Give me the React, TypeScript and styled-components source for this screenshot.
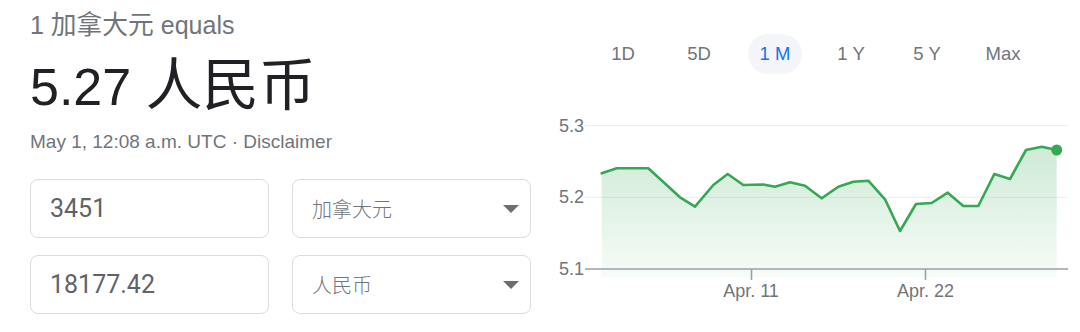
import React from "react";
import styled, { createGlobalStyle } from "styled-components";

const GlobalStyle = createGlobalStyle`
  html, body {
    margin: 0;
    padding: 0;
    background: #ffffff;
  }
  body {
    font-family: "Liberation Sans", Arial, "Noto Sans CJK SC", sans-serif;
  }
`;

const Page = styled.div`
  display: flex;
  width: 1080px;
  height: 332px;
  overflow: hidden;
`;

const LeftColumn = styled.div`
  flex: 0 0 501px;
  padding: 10px 0 0 30px;
`;

const Cjk = styled.span<{ $scale?: number }>`
  font-family: "Noto Sans CJK SC", sans-serif;
  font-size: ${(p) => p.$scale ?? 1.03}em;
  line-height: 1;
`;

const Title = styled.div`
  height: 30px;
  font-size: 25px;
  line-height: 30px;
  color: #70757a;
  white-space: nowrap;
`;

const Value = styled.div`
  margin-top: 12px;
  height: 60px;
  font-size: 52px;
  line-height: 60px;
  color: #202124;
  white-space: nowrap;
`;

const DateLine = styled.div`
  margin-top: 18px;
  height: 24px;
  font-size: 19px;
  line-height: 24px;
  color: #70757a;
  white-space: nowrap;
`;

const ConverterGrid = styled.div`
  margin-top: 25px;
  display: grid;
  grid-template-columns: 239px 239px;
  column-gap: 23px;
  row-gap: 17px;
`;

const FieldBox = styled.div`
  box-sizing: border-box;
  height: 59px;
  border: 1px solid #dadce0;
  border-radius: 8px;
  display: flex;
  align-items: center;
`;

const AmountField = styled(FieldBox)`
  padding-left: 19px;
  font-family: Roboto, "Liberation Sans", sans-serif;
  font-size: 25px;
  color: #5f6368;
`;

const CurrencySelect = styled(FieldBox)`
  justify-content: space-between;
  padding: 0 11px 0 19px;
  font-family: "Noto Sans CJK SC", sans-serif;
  font-size: 20px;
  font-weight: 300;
  color: #70757a;
`;

const RightColumn = styled.div`
  flex: 1;
  margin-left: 17px;
  padding-top: 34px;
  display: flex;
  flex-direction: column;
`;

const RangeTabs = styled.div`
  display: flex;
  gap: 22px;
  padding-left: 48px;
`;

const RangeTab = styled.div<{ $active?: boolean }>`
  width: 54px;
  height: 40px;
  border-radius: 20px;
  display: flex;
  align-items: center;
  justify-content: center;
  font-size: 18.5px;
  white-space: nowrap;
  color: ${(p) => (p.$active ? "#1a73e8" : "#70757a")};
  background: ${(p) => (p.$active ? "#f3f5f9" : "transparent")};
`;

const ChartSvg = styled.svg`
  display: block;
  margin-top: 26px;
`;

const AxisLabel = styled.text`
  font-family: "Liberation Sans", Arial, sans-serif;
  font-size: 18px;
  fill: #70757a;
`;

const Caret = () => (
  <svg width="16" height="8" viewBox="0 0 16 8">
    <path d="M0 0 L16 0 L8 8 Z" fill="#6b6f73" />
  </svg>
);

const points: [number, number][] = [
  [601.7, 173.3],
  [616.7, 168.3],
  [648.3, 168.3],
  [680, 197.3],
  [695, 206.7],
  [713.3, 185],
  [727.7, 174],
  [743.3, 185],
  [763.3, 184.5],
  [775, 186.7],
  [790, 182.3],
  [805, 185.7],
  [821.7, 198.3],
  [838.3, 186.7],
  [853.3, 181.7],
  [868.3, 180.7],
  [885, 199.3],
  [900, 231],
  [916, 204],
  [931.7, 203],
  [947.7, 192.7],
  [963.3, 206],
  [978.3, 206],
  [994.3, 174],
  [1010, 179],
  [1026, 150],
  [1041.7, 146.7],
  [1056.7, 150],
];

const ranges = ["1D", "5D", "1 M", "1 Y", "5 Y", "Max"];

const Chart = () => {
  const line = points.map(([x, y], i) => `${i ? "L" : "M"}${x} ${y}`).join(" ");
  const first = points[0];
  const last = points[points.length - 1];
  const area = `${line} L${last[0]} 277 L${first[0]} 277 Z`;
  return (
    <ChartSvg width="532" height="220" viewBox="548 100 532 220">
      <defs>
        <linearGradient id="fillGrad" x1="0" y1="146" x2="0" y2="277" gradientUnits="userSpaceOnUse">
          <stop offset="0" stopColor="#34a853" stopOpacity="0.24" />
          <stop offset="1" stopColor="#34a853" stopOpacity="0.04" />
        </linearGradient>
      </defs>
      <line x1="585" y1="125.5" x2="1068" y2="125.5" stroke="#ededed" strokeWidth="1" />
      <line x1="585" y1="197.3" x2="1068" y2="197.3" stroke="#ededed" strokeWidth="1" />
      <path d={area} fill="url(#fillGrad)" />
      <line x1="585" y1="269" x2="1068" y2="269" stroke="#9aa0a6" strokeWidth="1.6" />
      <line x1="751.5" y1="269" x2="751.5" y2="280" stroke="#9aa0a6" strokeWidth="1.6" />
      <line x1="925.5" y1="269" x2="925.5" y2="280" stroke="#9aa0a6" strokeWidth="1.6" />
      <path d={line} fill="none" stroke="#34a853" strokeWidth="2.6" strokeLinejoin="round" strokeLinecap="round" />
      <circle cx={last[0]} cy={last[1]} r="5.5" fill="#34a853" />
      <AxisLabel x="584" y="125.5" textAnchor="end" dominantBaseline="central">5.3</AxisLabel>
      <AxisLabel x="584" y="197.3" textAnchor="end" dominantBaseline="central">5.2</AxisLabel>
      <AxisLabel x="584" y="269" textAnchor="end" dominantBaseline="central">5.1</AxisLabel>
      <AxisLabel x="751" y="297" textAnchor="middle">Apr. 11</AxisLabel>
      <AxisLabel x="925.5" y="297" textAnchor="middle">Apr. 22</AxisLabel>
    </ChartSvg>
  );
};

export default function App() {
  return (
    <>
      <GlobalStyle />
      <Page>
        <LeftColumn>
          <Title>
            1 <Cjk>加拿大元</Cjk> equals
          </Title>
          <Value>
            5.27 <Cjk $scale={1.09}>人民币</Cjk>
          </Value>
          <DateLine>May 1, 12:08 a.m. UTC · Disclaimer</DateLine>
          <ConverterGrid>
            <AmountField>3451</AmountField>
            <CurrencySelect>
              <span>加拿大元</span>
              <Caret />
            </CurrencySelect>
            <AmountField>18177.42</AmountField>
            <CurrencySelect>
              <span>人民币</span>
              <Caret />
            </CurrencySelect>
          </ConverterGrid>
        </LeftColumn>
        <RightColumn>
          <RangeTabs>
            {ranges.map((r) => (
              <RangeTab key={r} $active={r === "1 M"}>
                {r}
              </RangeTab>
            ))}
          </RangeTabs>
          <Chart />
        </RightColumn>
      </Page>
    </>
  );
}
